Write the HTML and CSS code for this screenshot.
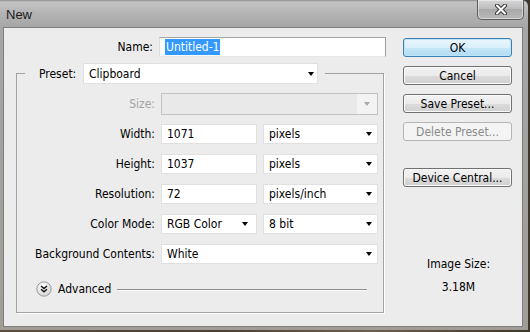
FILE: index.html
```html
<!DOCTYPE html>
<html lang="en">

<head>
    <meta charset="UTF-8" />
    <meta name="viewport" content="width=device-width, initial-scale=1.0" />
    <title>New</title>
    <link rel="stylesheet" href="styles.css">
</head>

<body>
    <div class="window">
        <!-- Title bar -->
        <div class="titlebar">
            <span class="title">New</span>
            <div class="close">
                <svg width="14" height="11" viewBox="0 0 14 11">
                    <path d="M3 1.5 L11 9.5 M11 1.5 L3 9.5" stroke="#3b3b3b" stroke-width="4" stroke-linecap="round" fill="none" />
                    <path d="M3 1.5 L11 9.5 M11 1.5 L3 9.5" stroke="#ffffff" stroke-width="2" stroke-linecap="round" fill="none" />
                </svg>
            </div>
        </div>

        <!-- Dialog body -->
        <div class="dialog">
            <div class="main">
                <div class="name-row">
                    <label class="name-label">Name:</label>
                    <div class="textbox"><span class="selected">Untitled-1</span></div>
                </div>

                <fieldset class="preset">
                    <legend>
                        <label class="legend-label">Preset:</label>
                        <div class="select preset-select"><span class="value">Clipboard</span><span class="arrow"></span></div>
                    </legend>

                    <div class="grid">
                        <label class="disabled-text">Size:</label>
                        <div class="select wide disabled"><span class="value"></span><span class="arrow-box"><span class="arrow"></span></span></div>

                        <label>Width:</label>
                        <div class="field">1071</div>
                        <div class="select"><span class="value">pixels</span><span class="arrow"></span></div>

                        <label>Height:</label>
                        <div class="field">1037</div>
                        <div class="select"><span class="value">pixels</span><span class="arrow"></span></div>

                        <label>Resolution:</label>
                        <div class="field">72</div>
                        <div class="select"><span class="value">pixels/inch</span><span class="arrow"></span></div>

                        <label>Color Mode:</label>
                        <div class="select mode"><span class="value">RGB Color</span><span class="arrow"></span></div>
                        <div class="select"><span class="value">8 bit</span><span class="arrow"></span></div>

                        <label>Background Contents:</label>
                        <div class="select wide"><span class="value">White</span><span class="arrow"></span></div>
                    </div>

                    <div class="advanced">
                        <svg width="16" height="16" viewBox="0 0 16 16">
                            <defs>
                                <radialGradient id="knob" cx="0.4" cy="0.35" r="0.7">
                                    <stop offset="0" stop-color="#ffffff" />
                                    <stop offset="1" stop-color="#d2d2d2" />
                                </radialGradient>
                            </defs>
                            <circle cx="8" cy="8" r="7.2" fill="url(#knob)" stroke="#9a9a9a" stroke-width="1" />
                            <path d="M5 5 L8 7.6 L11 5 M5 8.2 L8 10.8 L11 8.2" stroke="#111" stroke-width="1.4" fill="none" />
                        </svg>
                        <span class="advanced-text">Advanced</span>
                        <span class="rule"></span>
                    </div>
                </fieldset>
            </div>

            <div class="side">
                <button class="btn default">OK</button>
                <button class="btn">Cancel</button>
                <button class="btn">Save Preset...</button>
                <button class="btn" disabled>Delete Preset...</button>
                <button class="btn device">Device Central...</button>

                <div class="image-size">
                    <div>Image Size:</div>
                    <div class="size-value">3.18M</div>
                </div>
            </div>
        </div>
    </div>
</body>

</html>
```

FILE: styles.css
```css
* {
    box-sizing: border-box;
}

body {
    margin: 0;
    padding: 0;
    font-family: "DejaVu Sans Condensed", "DejaVu Sans", sans-serif;
    font-size: 12px;
    color: #000;
    background: linear-gradient(to right, #5a4f3e, #4a4133 40%, #6b5f4b 70%, #3f372c);
    min-height: 100vh;
}

.window {
    width: 528px;
    height: 330px;
    padding: 0 5px 3px 3px;
    background: linear-gradient(#8d8d8d 0, #c4c4c4 2px, #b2b2b2 14px, #a6a6a6 27px, #a19d96 100%);
    border-radius: 0 6px 0 0;
}

/* Title bar */
.titlebar {
    height: 27px;
    display: flex;
    align-items: flex-start;
}

.title {
    font-family: "Liberation Sans", sans-serif;
    font-size: 13px;
    color: #1b1b1b;
    padding: 7px 0 0 3px;
}

.close {
    margin-left: auto;
    margin-right: -1px;
    width: 47px;
    height: 20px;
    border: 1px solid #5d5d5d;
    border-top: none;
    border-radius: 0 0 5px 5px;
    background: linear-gradient(#d6d6d6, #bdbdbd 45%, #a9a9a9 50%, #b9b9b9);
    box-shadow: inset 0 0 0 1px rgba(255, 255, 255, 0.45);
    display: flex;
    justify-content: center;
    align-items: center;
}

/* Dialog body */
.dialog {
    height: 300px;
    background-color: #ececec;
    border: 1px solid #7e7e7e;
    display: flex;
}

.main {
    width: 386px;
    padding-top: 9px;
}

.name-row {
    display: flex;
    align-items: center;
}

.name-label {
    width: 149px;
    text-align: right;
    margin-right: 6px;
}

.textbox {
    width: 227px;
    height: 20px;
    background-color: #fff;
    border: 1px solid #dcdcdc;
    border-top-color: #a5a5a5;
    border-right-color: #9c9c9c;
    border-bottom-color: #e6e6e6;
    display: flex;
    align-items: center;
    padding-left: 5px;
}

.selected {
    background-color: #3399ff;
    color: #fff;
    padding: 1px 1px;
    line-height: 14px;
}

/* Preset group */
.preset {
    margin: 6px 0 0 12px;
    width: 368px;
    border: 1px solid #a2a2a2;
    box-shadow: 1px 1px 0 #fff;
    padding: 9px 5px 15px 8px;
    min-width: 0;
}

.preset legend {
    display: flex;
    align-items: center;
    padding: 0 7px 0 14px;
    background-color: #ececec;
}

.legend-label {
    width: 40px;
    margin-right: 4px;
}

.preset-select {
    width: 235px;
    height: 21px;
}

.grid {
    display: grid;
    grid-template-columns: 130px 96px 115px;
    grid-auto-rows: 21px;
    column-gap: 6px;
    row-gap: 9px;
    align-items: center;
}

.grid label {
    text-align: right;
    padding-right: 1px;
    margin-right: -1px;
    white-space: nowrap;
}

.disabled-text {
    color: #a3a3a3;
}

.field,
.select {
    height: 21px;
    background-color: #fff;
    border: 1px solid #e0e0e0;
    display: flex;
    align-items: center;
    padding-left: 5px;
    white-space: nowrap;
}

.grid .field,
.grid .select {
    height: 20px;
}

.select .value {
    flex: 1;
}

.arrow {
    width: 0;
    height: 0;
    border-left: 3.5px solid transparent;
    border-right: 3.5px solid transparent;
    border-top: 4px solid #000;
    margin-right: 5px;
}

.preset-select .arrow {
    margin-right: 3px;
}

.mode .arrow {
    margin-right: 8px;
}

.wide {
    grid-column: 2 / 4;
}

.grid .disabled {
    height: 22px;
    background-color: #e9e9e9;
    border-color: #c2c2c2;
    padding-right: 0;
}

.arrow-box {
    width: 20px;
    align-self: stretch;
    background-color: #f3f3f3;
    display: flex;
    align-items: center;
    justify-content: center;
}

.arrow-box .arrow {
    margin: 0;
    border-top-color: #a9a9a9;
}

.advanced {
    display: flex;
    align-items: center;
    height: 16px;
    margin-top: 17px;
    padding-left: 11px;
}

.advanced-text {
    margin-left: 6px;
}

.rule {
    flex: 1;
    height: 2px;
    border-top: 1px solid #8f8f8f;
    border-bottom: 1px solid #fafafa;
    margin: 1px 11px 0 6px;
}

/* Buttons column */
.side {
    margin-left: 13px;
    width: 109px;
    padding-top: 10px;
    display: flex;
    flex-direction: column;
    gap: 9px;
}

.btn {
    font-family: inherit;
    font-size: 12px;
    color: #000;
    height: 19px;
    padding: 0;
    border: 1px solid #707070;
    border-radius: 3px;
    background: linear-gradient(#f2f2f2 0%, #ebebeb 50%, #dddddd 51%, #cfcfcf 100%);
    box-shadow: inset 0 0 0 1px #fbfbfb;
}

.btn.default {
    border-color: #3c7fb1;
    background: linear-gradient(#eaf6fd 0%, #d9f0fc 50%, #c6e7f9 51%, #b2dcf3 100%);
    box-shadow: inset 0 0 0 1px #bfe4f8;
}

.btn:disabled {
    border-color: #b5b5b5;
    background: #f4f4f4;
    color: #8a8a8a;
    box-shadow: none;
}

.btn.device {
    margin-top: 18px;
}

.image-size {
    margin-top: 61px;
    text-align: center;
    padding-left: 2px;
}

.size-value {
    margin-top: 9px;
}
```
